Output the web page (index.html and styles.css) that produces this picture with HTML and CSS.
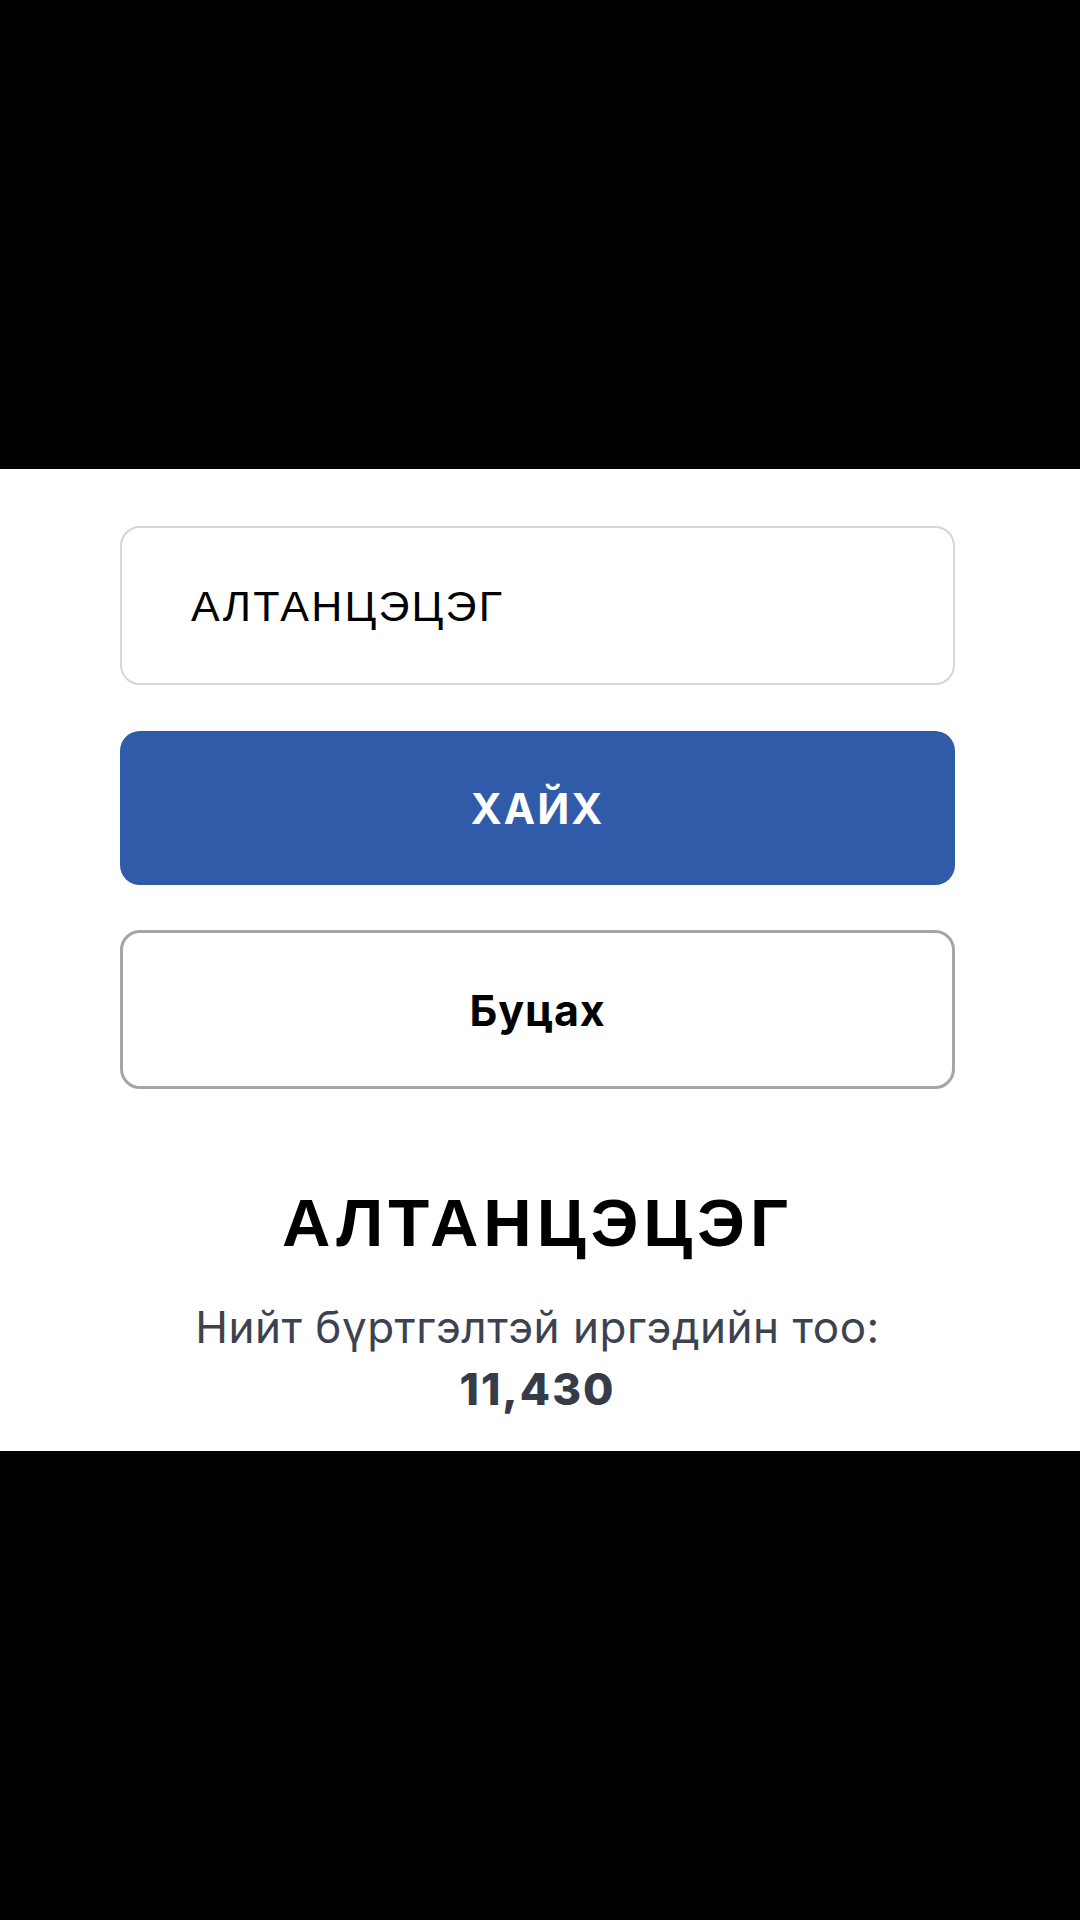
FILE: index.html
```html
<!DOCTYPE html>
<html lang="mn">
<head>
<meta charset="utf-8">
<title>Хайх</title>
<link rel="stylesheet" href="styles.css">
</head>
<body>
  <main class="panel">
    <div class="form">
      <div class="field">АЛТАНЦЭЦЭГ</div>
      <button class="btn btn-primary">ХАЙХ</button>
      <button class="btn btn-outline">Буцах</button>
    </div>
    <section class="result">
      <h1 class="result-name">АЛТАНЦЭЦЭГ</h1>
      <p class="result-label">Нийт бүртгэлтэй иргэдийн тоо:</p>
      <p class="result-count">11,430</p>
    </section>
  </main>
</body>
</html>
```

FILE: styles.css
```css
html, body {
  margin: 0;
  padding: 0;
}
body {
  background: #000;
  width: 1080px;
  height: 1920px;
  font-family: Inter, "Noto Sans", sans-serif;
}
.panel {
  margin-top: 469px;
  height: 982px;
  background: #fff;
  box-sizing: border-box;
  padding-top: 57px;
  overflow: hidden;
}
.form {
  width: 835px;
  margin-left: 120px;
  display: flex;
  flex-direction: column;
  gap: 46px;
}
.field {
  box-sizing: border-box;
  height: 159px;
  border: 2px solid #d6d6da;
  border-radius: 20px;
  display: flex;
  align-items: center;
  padding-left: 69px;
  padding-top: 2px;
  font-family: "Liberation Sans", Arial, sans-serif;
  font-size: 43px;
  letter-spacing: 2.2px;
  color: #000;
}
.btn {
  box-sizing: border-box;
  width: 100%;
  border-radius: 20px;
  font-family: Inter, "Noto Sans", sans-serif;
  font-weight: 700;
  font-size: 42px;
  cursor: pointer;
  padding: 0;
}
.btn-primary {
  height: 154px;
  background: #2f5ba8;
  border: none;
  color: #fff;
  letter-spacing: 2px;
}
.btn-outline {
  height: 159px;
  margin-top: -1px;
  background: #fff;
  border: 3px solid #a4a4ac;
  color: #000;
  font-size: 43px;
  letter-spacing: 0.8px;
}
.result {
  text-align: center;
  margin-left: 120px;
  width: 835px;
}
.result-name {
  margin: 95px 0 0;
  font-family: "Liberation Sans", Arial, sans-serif;
  font-weight: 700;
  font-size: 67px;
  line-height: 77px;
  letter-spacing: 5px;
  color: #000;
}
.result-label {
  margin: 37px 0 0;
  font-size: 44px;
  line-height: 58px;
  letter-spacing: 0.5px;
  color: #3c4250;
}
.result-count {
  margin: 4px 0 0;
  font-size: 44px;
  line-height: 58px;
  font-weight: 800;
  letter-spacing: 2px;
  color: #353b47;
}
```
